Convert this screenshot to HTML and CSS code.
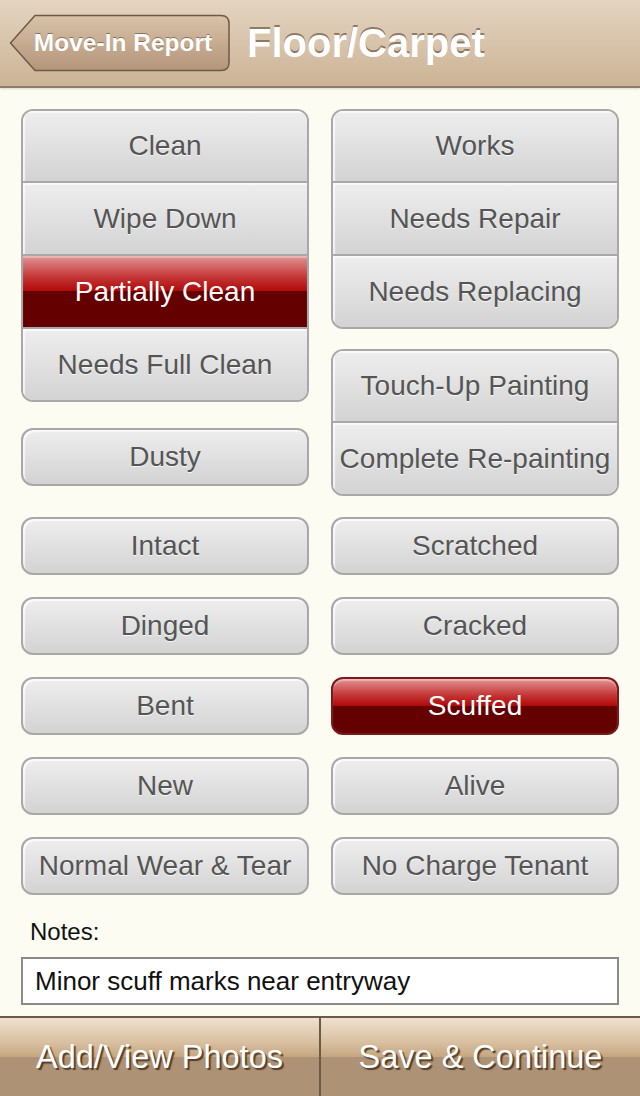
FILE: index.html
```html
<!DOCTYPE html>
<html lang="en">
<head>
  <meta charset="UTF-8">
  <meta name="viewport" content="width=device-width, initial-scale=1.0">
  <title>Floor/Carpet</title>
  <link rel="stylesheet" href="styles.css">
</head>
<body>
  <div class="header">
    <a class="back" href="#">
      <svg class="back-shape" width="222" height="58" viewBox="0 0 222 58">
        <defs>
          <linearGradient id="backFill" x1="0" y1="0" x2="0" y2="1">
            <stop offset="0" stop-color="#d8c2a8"/>
            <stop offset="1" stop-color="#b4957a"/>
          </linearGradient>
        </defs>
        <path d="M1.5 29 L26 1.5 H212 Q220 1.5 220 9.5 V48.5 Q220 56.5 212 56.5 H26 Z" fill="url(#backFill)" stroke="#6e5a46" stroke-width="1.5"/>
      </svg>
      <span>Move-In Report</span>
    </a>
    <h1>Floor/Carpet</h1>
  </div>

  <div class="content">
    <div class="top">
      <div class="col">
        <div class="group">
          <button class="seg">Clean</button>
          <button class="seg">Wipe Down</button>
          <button class="seg selected">Partially Clean</button>
          <button class="seg">Needs Full Clean</button>
        </div>
        <button class="btn dusty">Dusty</button>
      </div>
      <div class="col right">
        <div class="group">
          <button class="seg">Works</button>
          <button class="seg">Needs Repair</button>
          <button class="seg">Needs Replacing</button>
        </div>
        <div class="group">
          <button class="seg">Touch-Up Painting</button>
          <button class="seg">Complete Re-painting</button>
        </div>
      </div>
    </div>

    <div class="singles">
      <button class="btn">Intact</button>
      <button class="btn">Scratched</button>
      <button class="btn">Dinged</button>
      <button class="btn">Cracked</button>
      <button class="btn">Bent</button>
      <button class="btn selected">Scuffed</button>
      <button class="btn">New</button>
      <button class="btn">Alive</button>
      <button class="btn">Normal Wear &amp; Tear</button>
      <button class="btn">No Charge Tenant</button>
    </div>

    <div class="notes">
      <label for="notes">Notes:</label>
      <input type="text" id="notes" value="Minor scuff marks near entryway">
    </div>
  </div>

  <div class="footer">
    <button class="foot-btn">Add/View Photos</button>
    <button class="foot-btn">Save &amp; Continue</button>
  </div>
</body>
</html>
```

FILE: styles.css
```css
body {
  margin: 0;
  width: 640px;
  height: 1096px;
  background: #fcfcf3;
  font-family: 'Liberation Sans', Arial, sans-serif;
  display: flex;
  flex-direction: column;
  overflow: hidden;
}

.header {
  height: 86px;
  border-bottom: 2px solid #8c7b69;
  background: linear-gradient(to bottom, #e4d4c1, #ccb395);
  display: flex;
  align-items: center;
  padding-left: 9px;
  gap: 16px;
  box-shadow: 0 1px 2px rgba(0, 0, 0, 0.15);
}

.back {
  position: relative;
  width: 222px;
  height: 58px;
  display: flex;
  align-items: center;
  justify-content: center;
  padding-left: 6px;
  box-sizing: border-box;
  text-decoration: none;
}

.back-shape {
  position: absolute;
  left: 0;
  top: 0;
}

.back span {
  position: relative;
  color: #fff;
  font-weight: bold;
  font-size: 24.5px;
  text-shadow: 0 -1px 0 rgba(80, 55, 30, 0.55);
}

.header h1 {
  margin: 0;
  color: #fff;
  font-size: 40px;
  font-weight: bold;
  text-shadow: 0 -2px 0 rgba(90, 70, 50, 0.6);
}

.content {
  padding: 21px 21px 0;
  display: flex;
  flex-direction: column;
  gap: 21px;
}

.top {
  display: grid;
  grid-template-columns: 288px 288px;
  column-gap: 22px;
  align-items: start;
}

.col {
  display: flex;
  flex-direction: column;
  gap: 26px;
}

.col.right {
  gap: 20px;
}

button {
  font-family: 'Liberation Sans', Arial, sans-serif;
  font-size: 28px;
  color: #555;
  cursor: pointer;
  padding: 0;
  white-space: nowrap;
}

.group {
  display: flex;
  flex-direction: column;
  border: 2px solid #a8a8a8;
  border-radius: 12px;
  overflow: hidden;
}

.seg {
  height: 73px;
  border: none;
  border-top: 2px solid #a8a8a8;
  background: linear-gradient(to bottom, #eeeeee, #d3d3d3);
  box-shadow: inset 2px 2px 1px rgba(255, 255, 255, 0.7);
  text-shadow: 0 1px 0 rgba(255, 255, 255, 0.8);
}

.seg:first-child {
  height: 70px;
  border-top: none;
}

.btn {
  height: 58px;
  border: 2px solid #a8a8a8;
  border-radius: 12px;
  background: linear-gradient(to bottom, #eeeeee, #d3d3d3);
  box-shadow: inset 2px 2px 1px rgba(255, 255, 255, 0.7);
  text-shadow: 0 1px 0 rgba(255, 255, 255, 0.8);
}

.selected {
  color: #fff;
  text-shadow: none;
  background: linear-gradient(to bottom, #e29494 0%, #c43535 30%, #b00808 50%, #640000 50%, #640000 100%);
  box-shadow: inset 0 2px 1px rgba(255, 255, 255, 0.35);
}

.btn.selected {
  border-color: #7a1a1a;
}

.singles {
  display: grid;
  grid-template-columns: 288px 288px;
  gap: 22px;
}

.notes {
  margin-top: 3px;
  display: flex;
  flex-direction: column;
  gap: 12px;
}

.notes label {
  padding-left: 9px;
  font-size: 24px;
  line-height: 26px;
  color: #111;
}

.notes input {
  height: 48px;
  box-sizing: border-box;
  border: 2px solid #8a8a8a;
  background: #fff;
  padding: 0 12px;
  font-family: 'Liberation Sans', Arial, sans-serif;
  font-size: 26px;
  color: #111;
  outline: none;
}

.footer {
  margin-top: auto;
  height: 78px;
  display: flex;
  border-top: 2px solid #6b5a48;
}

.foot-btn {
  flex: 1;
  border: none;
  background: linear-gradient(to bottom, #efe2cf 0%, #d9c1a2 30%, #c6a680 50%, #ad9276 50%, #ad9276 100%);
  color: #fff;
  font-size: 32.5px;
  text-shadow: 2px 2px 1px rgba(60, 40, 20, 0.8);
}

.foot-btn:first-child {
  border-right: 2px solid #6b5a48;
}
```
